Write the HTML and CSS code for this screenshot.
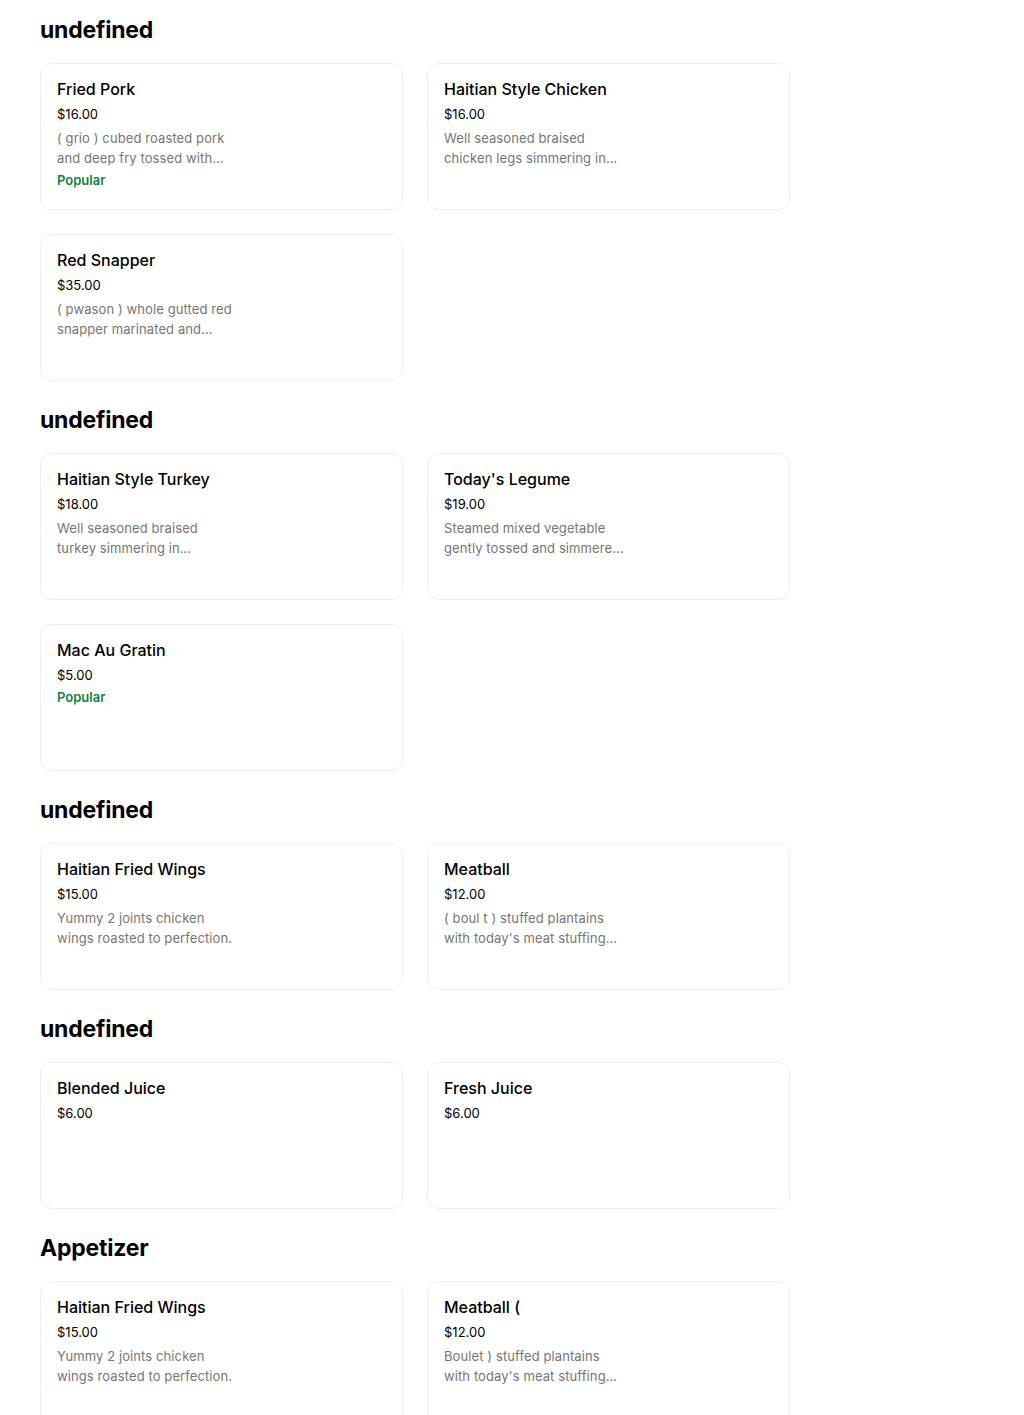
FILE: index.html
```html
<!DOCTYPE html>
<html lang="en">
<head>
<meta charset="utf-8">
<title>Menu</title>
<link rel="stylesheet" href="styles.css">
</head>
<body>
<main class="menu">
  <section class="section">
    <h2 class="section-title">undefined</h2>
    <div class="grid">
      <div class="card">
        <div class="item-name">Fried Pork</div>
        <div class="item-price">$16.00</div>
        <div class="item-desc">( grio ) cubed roasted pork<br>and deep fry tossed with…</div>
        <div class="item-tag">Popular</div>
      </div>
      <div class="card">
        <div class="item-name">Haitian Style Chicken</div>
        <div class="item-price">$16.00</div>
        <div class="item-desc">Well seasoned braised<br>chicken legs simmering in…</div>
      </div>
      <div class="card">
        <div class="item-name">Red Snapper</div>
        <div class="item-price">$35.00</div>
        <div class="item-desc">( pwason ) whole gutted red<br>snapper marinated and…</div>
      </div>
    </div>
  </section>

  <section class="section">
    <h2 class="section-title">undefined</h2>
    <div class="grid">
      <div class="card">
        <div class="item-name">Haitian Style Turkey</div>
        <div class="item-price">$18.00</div>
        <div class="item-desc">Well seasoned braised<br>turkey simmering in…</div>
      </div>
      <div class="card">
        <div class="item-name">Today's Legume</div>
        <div class="item-price">$19.00</div>
        <div class="item-desc">Steamed mixed vegetable<br>gently tossed and simmere…</div>
      </div>
      <div class="card">
        <div class="item-name">Mac Au Gratin</div>
        <div class="item-price">$5.00</div>
        <div class="item-tag">Popular</div>
      </div>
    </div>
  </section>

  <section class="section">
    <h2 class="section-title">undefined</h2>
    <div class="grid">
      <div class="card">
        <div class="item-name">Haitian Fried Wings</div>
        <div class="item-price">$15.00</div>
        <div class="item-desc">Yummy 2 joints chicken<br>wings roasted to perfection.</div>
      </div>
      <div class="card">
        <div class="item-name">Meatball</div>
        <div class="item-price">$12.00</div>
        <div class="item-desc">( boul t ) stuffed plantains<br>with today's meat stuffing…</div>
      </div>
    </div>
  </section>

  <section class="section">
    <h2 class="section-title">undefined</h2>
    <div class="grid">
      <div class="card">
        <div class="item-name">Blended Juice</div>
        <div class="item-price">$6.00</div>
      </div>
      <div class="card">
        <div class="item-name">Fresh Juice</div>
        <div class="item-price">$6.00</div>
      </div>
    </div>
  </section>

  <section class="section">
    <h2 class="section-title">Appetizer</h2>
    <div class="grid">
      <div class="card">
        <div class="item-name">Haitian Fried Wings</div>
        <div class="item-price">$15.00</div>
        <div class="item-desc">Yummy 2 joints chicken<br>wings roasted to perfection.</div>
      </div>
      <div class="card">
        <div class="item-name">Meatball (</div>
        <div class="item-price">$12.00</div>
        <div class="item-desc">Boulet ) stuffed plantains<br>with today's meat stuffing…</div>
      </div>
    </div>
  </section>
</main>
</body>
</html>
```

FILE: styles.css
```css
* { box-sizing: border-box; }

html, body {
  margin: 0;
  padding: 0;
  background: #ffffff;
}

body {
  font-family: Inter, "Liberation Sans", sans-serif;
  color: #000000;
}

.menu {
  width: 790px;
  padding: 15px 0 0 40px;
  display: flex;
  flex-direction: column;
  gap: 24px;
}

.section-title {
  margin: 0 0 18px 0;
  font-size: 23px;
  line-height: 30px;
  font-weight: 700;
  letter-spacing: -0.2px;
}

.grid {
  display: grid;
  grid-template-columns: 363px 363px;
  gap: 24px;
}

.card {
  height: 147px;
  border: 1px solid #eeeeee;
  border-radius: 12px;
  padding: 13px 16px;
}

.item-name {
  font-size: 16px;
  line-height: 24px;
  font-weight: 500;
  color: #000000;
  margin-bottom: 3px;
}

.item-price {
  font-size: 13px;
  line-height: 20px;
  color: #000000;
  margin-bottom: 4px;
}

.item-desc {
  font-size: 13px;
  line-height: 20px;
  color: #757575;
  white-space: nowrap;
  letter-spacing: 0.1px;
}

.item-tag {
  font-size: 13px;
  line-height: 20px;
  font-weight: 600;
  color: #0e8345;
  margin-top: 2px;
}

.item-price + .item-tag {
  margin-top: -2px;
}
```
